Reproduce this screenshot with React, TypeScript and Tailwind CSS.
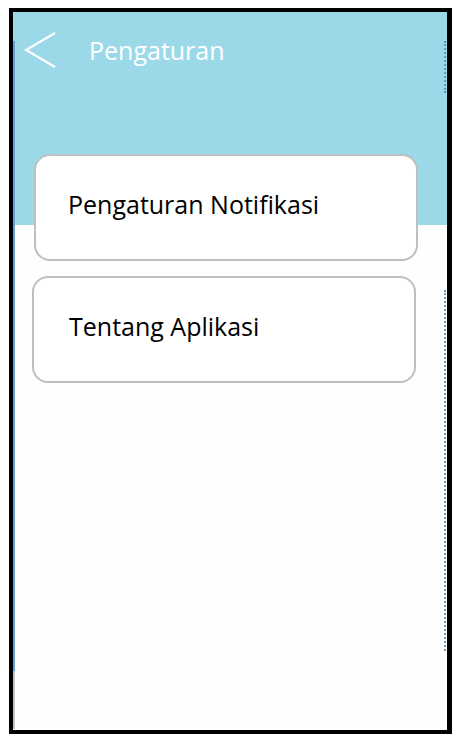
export default function App() {
  return (
    <div className="w-[463px] h-[735px] bg-white pt-[8px] pl-[9px]" style={{ fontFamily: '"Open Sans", "Noto Sans", sans-serif' }}>
      <div className="relative w-[443px] h-[726px] border-l-4 border-t-4 border-r-[5px] border-b-4 border-black bg-[linear-gradient(to_bottom,#9bd9e9_213px,#fefefe_213px)]">
        <div className="absolute left-0 top-[29px] w-[2px] h-[630px] bg-[#5fa3dc]" />
        <div className="absolute left-0 top-[659px] w-[2px] h-[58px] bg-[#c4c4c4]" />
        <div className="absolute right-[1px] top-[29px] w-[2px] h-[52px] border-r-2 border-dotted border-[#6a93c0]" />
        <div className="absolute right-[1px] top-[278px] w-[2px] h-[361px] border-r-2 border-dotted border-[#6a93c0]" />
        <div className="flex items-center h-[76px] pt-[1px]">
          <svg width="34" height="40" viewBox="0 0 34 40" className="ml-[11px]">
            <polyline points="31,2 2,19 31,36" fill="none" stroke="white" strokeWidth="2.2" />
          </svg>
          <span className="ml-[31px] text-[25px] text-white leading-none pb-[1px]">Pengaturan</span>
        </div>
        <div className="flex flex-col gap-[15px] mt-[66px]">
          <div className="ml-[21px] w-[384px] h-[107px] rounded-[16px] border-2 border-[#bfbfbf] bg-white flex items-center pl-[32px] pb-[6px]">
            <span className="text-[25px] text-black leading-none">Pengaturan Notifikasi</span>
          </div>
          <div className="ml-[19px] w-[384px] h-[107px] rounded-[16px] border-2 border-[#bfbfbf] bg-white flex items-center pl-[35px] pb-[6px]">
            <span className="text-[25px] text-black leading-none">Tentang Aplikasi</span>
          </div>
        </div>
      </div>
    </div>
  );
}
